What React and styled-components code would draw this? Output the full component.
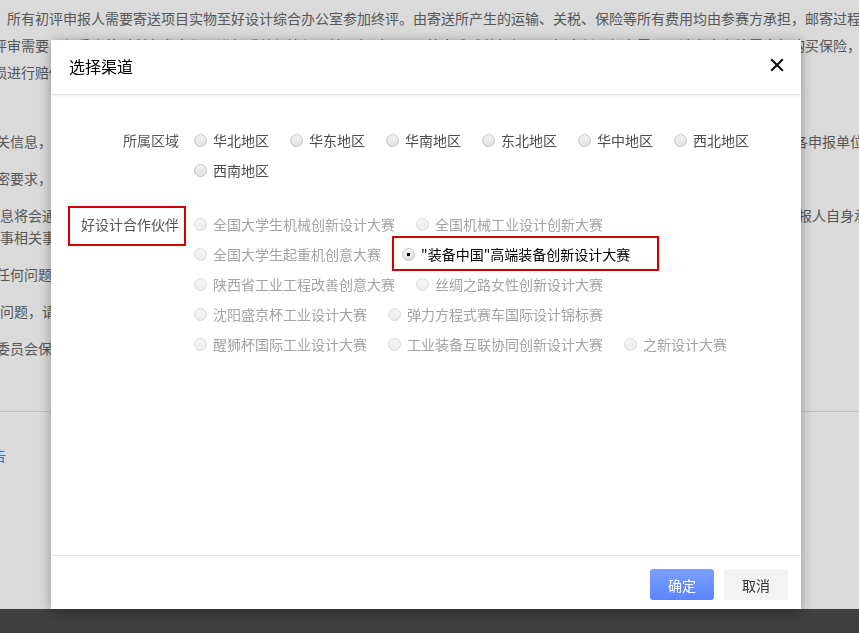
import React from 'react';
import styled, { createGlobalStyle } from 'styled-components';

const GlobalStyle = createGlobalStyle`
  html, body {
    margin: 0;
    padding: 0;
    height: 100%;
    overflow: hidden;
  }
  body {
    font-family: "Noto Sans CJK SC", "Liberation Sans", sans-serif;
    font-size: 14px;
    color: #666;
    background: #fff;
  }
  #root {
    height: 100%;
  }
`;

const Page = styled.div`
  display: flex;
  flex-direction: column;
  height: 100%;
`;

const Article = styled.div`
  flex: 1;
  overflow: hidden;
  padding-top: 5px;
  white-space: nowrap;
`;

const Line = styled.p`
  margin: ${(p) => p.$top || 0}px 0 0 ${(p) => p.$x || 0}px;
  line-height: ${(p) => p.$lh || 22}px;
  color: #666;
`;

const Rule = styled.hr`
  margin: 52px 0 0;
  border: none;
  border-top: 1px solid #e2e2e2;
`;

const DocLink = styled.a`
  display: block;
  margin: 32px 0 0 -22px;
  line-height: 22px;
  color: #3f7cf2;
  text-decoration: none;
`;

const PageFooter = styled.div`
  height: 24px;
  flex-shrink: 0;
  background: #4b4b4b;
`;

const Mask = styled.div`
  position: fixed;
  inset: 0;
  background: rgba(0, 0, 0, 0.145);
  display: flex;
  align-items: flex-start;
  padding: 40px 0 0 51px;
  box-sizing: border-box;
`;

const Dialog = styled.div`
  width: 750px;
  height: 569px;
  background: #fff;
  display: flex;
  flex-direction: column;
  box-shadow: 0 2px 12px rgba(0, 0, 0, 0.35);
`;

const Header = styled.div`
  height: 54px;
  flex-shrink: 0;
  display: flex;
  align-items: center;
  justify-content: space-between;
  padding: 0 17px 0 18px;
  border-bottom: 1px solid #e6e6e6;
  box-shadow: 0 1px 4px rgba(0, 0, 0, 0.06);
  position: relative;
  z-index: 1;
`;

const Title = styled.h3`
  margin: 0 0 2px;
  font-size: 16px;
  font-weight: normal;
  color: #000;
`;

const CloseButton = styled.button`
  display: flex;
  padding: 0;
  margin-bottom: 5px;
  border: none;
  background: none;
  cursor: pointer;
`;

const Body = styled.div`
  flex: 1;
  padding: 30px 24px 0 18px;
`;

const Field = styled.div`
  display: flex;
  align-items: flex-start;

  & + & {
    margin-top: 24px;
  }
`;

const Label = styled.div`
  position: relative;
  width: 110px;
  flex-shrink: 0;
  margin-right: 15px;
  text-align: right;
  line-height: 30px;
  color: #555;

  ${(p) =>
    p.$marked &&
    `
    &::after {
      content: '';
      position: absolute;
      left: -1px;
      right: -7px;
      top: -3px;
      bottom: -7px;
      border: 2px solid #d40000;
    }
  `}
`;

const Options = styled.div`
  flex: 1;
  display: flex;
  flex-wrap: wrap;
`;

const Option = styled.label`
  position: relative;
  display: flex;
  align-items: center;
  height: 30px;
  margin-right: 21px;
  white-space: nowrap;
  color: ${(p) => (p.$checked ? '#000' : p.$disabled ? '#a3a3a3' : '#4d4d4d')};

  ${(p) =>
    p.$marked &&
    `
    &::after {
      content: '';
      position: absolute;
      left: -10px;
      right: -29px;
      top: -3px;
      bottom: -2px;
      border: 2px solid #d40000;
    }
  `}
`;

const Radio = styled.input`
  appearance: none;
  width: 13px;
  height: 13px;
  margin: 0 6px 0 0;
  border-radius: 50%;
  border: 1px solid ${(p) => (p.disabled && !p.checked ? '#dadada' : '#c2c2c2')};
  background: ${(p) =>
    p.checked
      ? 'radial-gradient(circle, #000 0 1.4px, transparent 1.9px), linear-gradient(#f6f6f6, #dcdcdc)'
      : p.disabled
      ? 'linear-gradient(#f5f5f5, #ececec)'
      : 'linear-gradient(#f2f2f2, #e2e2e2)'};
  box-sizing: border-box;
`;

const Footer = styled.div`
  flex-shrink: 0;
  display: flex;
  justify-content: flex-end;
  gap: 10px;
  padding: 13px 13px 9px;
  border-top: 1px solid #e5e5e5;
`;

const Button = styled.button`
  width: 64px;
  height: 31px;
  border: none;
  border-radius: 3px;
  font-family: inherit;
  font-size: 14px;
  cursor: pointer;
  color: ${(p) => (p.$primary ? '#fff' : '#333')};
  background: ${(p) => (p.$primary ? 'linear-gradient(#7c9eff, #5a85ff)' : '#f3f3f3')};
`;

const regions = ['华北地区', '华东地区', '华南地区', '东北地区', '华中地区', '西北地区', '西南地区'];

const partners = [
  { name: '全国大学生机械创新设计大赛' },
  { name: '全国机械工业设计创新大赛' },
  { name: '全国大学生起重机创意大赛' },
  { name: '"装备中国"高端装备创新设计大赛', checked: true },
  { name: '陕西省工业工程改善创意大赛' },
  { name: '丝绸之路女性创新设计大赛' },
  { name: '沈阳盛京杯工业设计大赛' },
  { name: '弹力方程式赛车国际设计锦标赛' },
  { name: '醒狮杯国际工业设计大赛' },
  { name: '工业装备互联协同创新设计大赛' },
  { name: '之新设计大赛' },
];

const CloseIcon = () => (
  <svg width="14" height="14" viewBox="0 0 14 14">
    <path d="M1.2 1.2L12.8 12.8M12.8 1.2L1.2 12.8" stroke="#111" strokeWidth="2.2" />
  </svg>
);

export default function App() {
  return (
    <>
      <GlobalStyle />
      <Page>
        <Article>
          <Line $x={-7} $lh={27}>
            {'\u3000所有初评申报人需要寄送项目实物至好设计综合办公室参加终评。由寄送所产生的运输、关税、保险等所有费用均由参赛方承担，邮寄过程中如有损坏由参赛方自行负责。'}
          </Line>
          <Line $x={-7} $lh={27}>
            评审需要，组委会将对所有参赛作品进行妥善保管与运输，但对于不可抗力造成的损坏不承担责任，如有需要，请参赛者按需自行购买保险，以保障作品安全。
          </Line>
          <Line $x={-7} $lh={27}>
            损进行赔偿。
          </Line>
          <Line $x={-4} $top={44}>
            关信息，仅用于本次大赛的评审、展示及宣传推广工作，组委会将严格遵守相关法律法规，不会向任何第三方泄露或转让参赛者与各申报单位的相关资料。
          </Line>
          <Line $x={-4} $top={15}>
            密要求，申报时请注明。
          </Line>
          <Line $x={0} $top={15}>
            息将会通过电子邮件或短信的方式发送至申报人预留的联系方式，请确保所填写的联系信息准确无误，若联系信息有误，后果由申报人自身承担。
          </Line>
          <Line $x={0}>事相关事宜。</Line>
          <Line $x={-4} $top={15}>
            任何问题，请及时与组委会联系。
          </Line>
          <Line $x={0} $top={15}>
            问题，请致电组委会办公室。
          </Line>
          <Line $x={-4} $top={15}>
            委员会保留最终解释权。
          </Line>
          <Rule />
          <DocLink href="#">报告</DocLink>
        </Article>
        <PageFooter />
      </Page>

      <Mask>
        <Dialog>
          <Header>
            <Title>选择渠道</Title>
            <CloseButton aria-label="关闭">
              <CloseIcon />
            </CloseButton>
          </Header>
          <Body>
            <Field>
              <Label>所属区域</Label>
              <Options>
                {regions.map((r) => (
                  <Option key={r}>
                    <Radio type="radio" name="region" />
                    {r}
                  </Option>
                ))}
              </Options>
            </Field>
            <Field>
              <Label $marked>好设计合作伙伴</Label>
              <Options>
                {partners.map((p) => (
                  <Option key={p.name} $disabled={!p.checked} $checked={p.checked} $marked={p.checked}>
                    <Radio type="radio" name="partner" disabled={!p.checked} checked={!!p.checked} readOnly />
                    {p.name}
                  </Option>
                ))}
              </Options>
            </Field>
          </Body>
          <Footer>
            <Button $primary>确定</Button>
            <Button>取消</Button>
          </Footer>
        </Dialog>
      </Mask>
    </>
  );
}
